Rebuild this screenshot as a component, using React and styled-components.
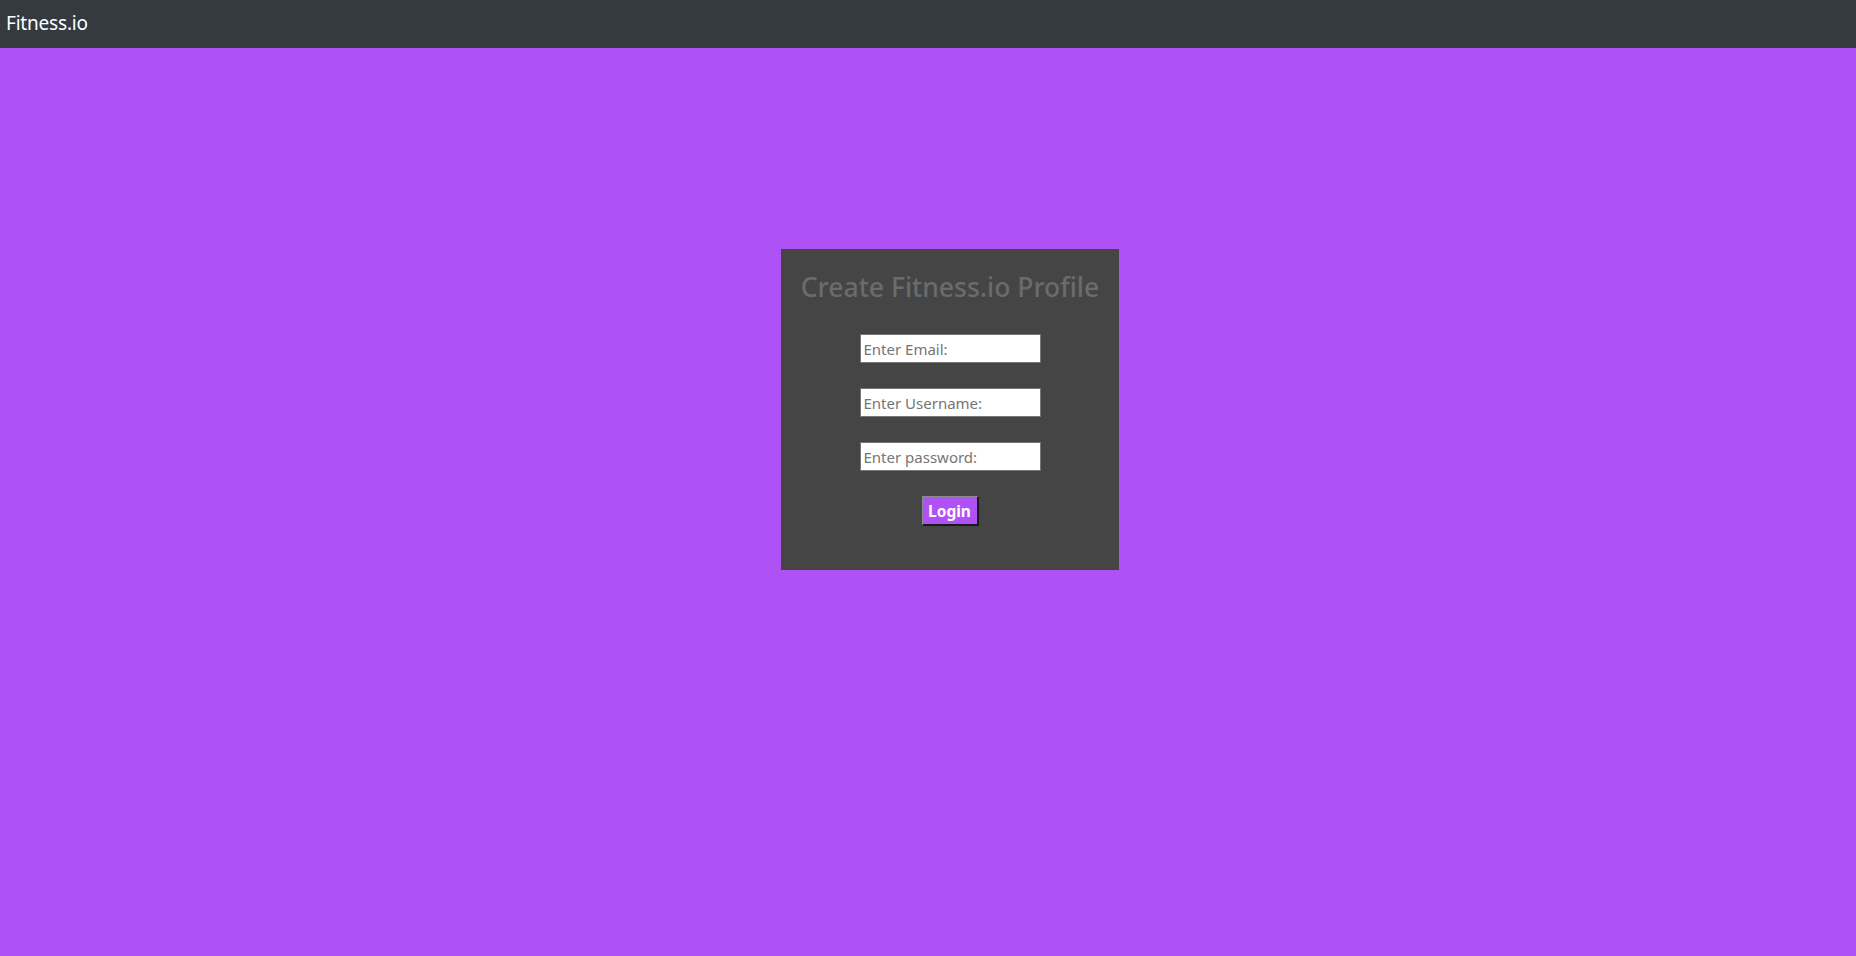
import React from "react";
import styled, { createGlobalStyle } from "styled-components";

const GlobalStyle = createGlobalStyle`
  html, body {
    margin: 0;
    padding: 0;
    height: 100%;
    background: #af52f5;
    font-family: "Noto Sans", "Open Sans", "Liberation Sans", sans-serif;
  }
  #root { min-height: 100%; }
`;

const Page = styled.div`
  min-height: 956px;
  background: #af52f5;
  display: flex;
  flex-direction: column;
`;

const NavBar = styled.nav`
  height: 48px;
  background: #343a40;
  display: flex;
  align-items: center;
  padding: 0 6px;
  box-sizing: border-box;
`;

const Brand = styled.span`
  color: #ffffff;
  font-size: 19px;
  letter-spacing: -0.2px;
  margin-top: -2px;
`;

const Main = styled.main`
  display: flex;
  justify-content: center;
  padding-top: 201px;
  padding-left: 44px;
`;

const Card = styled.form`
  width: 338px;
  height: 321px;
  box-sizing: border-box;
  background: #454545;
  display: flex;
  flex-direction: column;
  align-items: center;
  padding-top: 21px;
`;

const Title = styled.h3`
  margin: 0 0 30px;
  color: #6b6b6b;
  font-size: 26.5px;
  font-weight: 500;
  line-height: 34px;
  white-space: nowrap;
`;

const Field = styled.input`
  width: 181px;
  height: 29px;
  box-sizing: border-box;
  border: 1px solid #767676;
  background: #fff;
  padding: 0 3px;
  margin-bottom: 25px;
  font-family: inherit;
  font-size: 15px;
  outline: none;
  &::placeholder { color: #757575; }
`;

const Submit = styled.button`
  width: 57px;
  height: 30px;
  box-sizing: border-box;
  padding: 0;
  background: #af52f5;
  color: #fff;
  font-family: inherit;
  font-weight: 700;
  font-size: 15.5px;
  border-style: solid;
  border-width: 1px 2px 2px 1px;
  border-color: #8a8a8a #1a1a1a #1a1a1a #8a8a8a;
  cursor: pointer;
`;

export default function App() {
  return (
    <Page>
      <GlobalStyle />
      <NavBar>
        <Brand>Fitness.io</Brand>
      </NavBar>
      <Main>
        <Card onSubmit={(e) => e.preventDefault()}>
          <Title>Create Fitness.io Profile</Title>
          <Field type="email" placeholder="Enter Email:" />
          <Field type="text" placeholder="Enter Username:" />
          <Field type="password" placeholder="Enter password:" />
          <Submit type="submit">Login</Submit>
        </Card>
      </Main>
    </Page>
  );
}
